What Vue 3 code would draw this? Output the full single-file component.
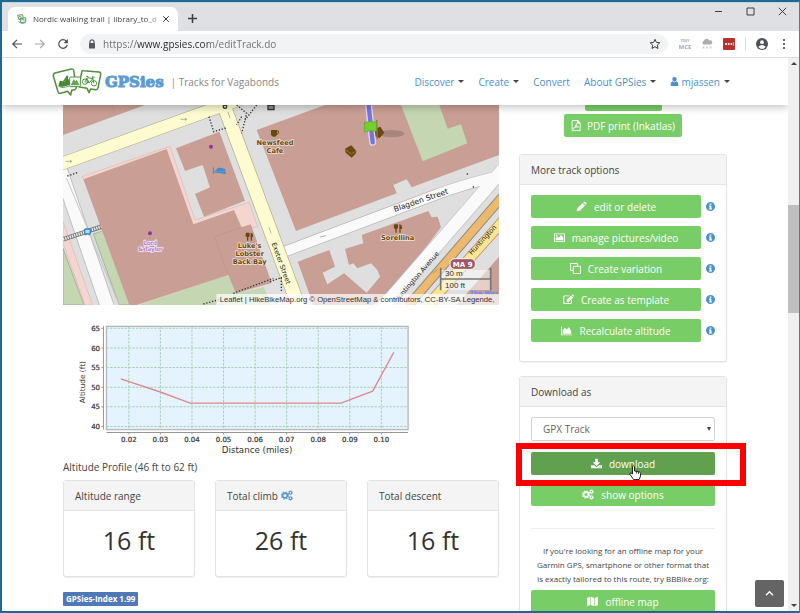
<script setup>
import { ref } from 'vue'

const address = ref('https://www.gpsies.com/editTrack.do')
const format = ref('GPX Track')

const nav = [
  { label: 'Discover', caret: true },
  { label: 'Create', caret: true },
  { label: 'Convert' },
  { label: 'About GPSies', caret: true },
  { label: 'mjassen', caret: true, user: true },
]

const icons = {
  pencil: 'M1 15l1-4.5 7.6-7.6 3.5 3.5L5.500 14zM10.600 2l1-1q.8-.7 1.600 0l1.900 1.900q.7.8 0 1.600l-1 1z',
  picture: 'M0 2h16v12H0zM1.400 3.400v9.200h13.200V3.400zM2.500 11.500V9.500L5 7l1.500 1.500 4-4 3 3v4zM4 4.200a1.300 1.300 0 1 1 0 2.600 1.300 1.300 0 0 1 0-2.600z',
  copy: 'M1.500 0H10q1.500 0 1.500 1.500V4h3Q16 4 16 5.500v9q0 1.500-1.500 1.500h-9Q4 16 4 14.500V11.500H1.500Q0 11.500 0 10V1.500Q0 0 1.500 0zM1.300 1.300v8.900H4V5.500Q4 4 5.500 4h4.700V1.300zM5.300 5.300v9.400h9.400V5.300z',
  edit: 'M2.500 2H10L8.600 3.400H3q-1.200 0-1.200 1.200V12q0 1.200 1.200 1.200h7.500q1.200 0 1.200-1.200v-2.500L13.100 8v4.500q0 2.200-2.200 2.200H2.500Q.3 14.700.3 12.500V4.200Q.3 2 2.500 2zM5.500 11.500V8.500L11.800 2.200l3 3-6.300 6.300zM12.500 1.500l.8-.8q.6-.5 1.200 0l1.300 1.300q.5.6 0 1.200l-.8.8z',
  area: 'M0 2h1.300v11.700H16V15H0zM2.300 12.700V8.500L5.500 4l3 2.500 3-3.500 3.300 6v3.700z',
  download: 'M6 1h4v5h3.500L8 11.500 2.500 6H6zM0 10.500h4.500L8 13.500l3.500-3H16V15H0zM11.500 12.700v1h1v-1zM13.700 12.700v1h1v-1z',
  map: 'M0 3l4.800-2v12L0 15zM5.600 1l4.800 2v12l-4.800-2zM11.200 3L16 1v12l-4.800 2z',
  pdf: 'M2.500 0H10l4 4v10.500q0 1.500-1.500 1.500h-10Q1 16 1 14.500v-13Q1 0 2.500 0zM2.300 1.300v13.400h10.400V5.300H8.700V1.300zM7 5h1.200q.3 2-.2 3.300 1 1.500 3.500 1.500v1.100q-1.700.3-3.800-.5-1.300.2-2.300.7-1 2.400-2 2.400l-.6-.8q.5-1.300 2-2Q7 8 7 5z',
  user: 'M8 0a3.900 4.200 0 1 1 0 8.400A3.900 4.200 0 0 1 8 0zM4.600 7.600Q8 10.800 11.400 7.600 15 8.600 15 14q0 2-2 2H3q-2 0-2-2 0-5.400 3.600-6.400z',
  info: 'M8 0a8 8 0 1 1 0 16A8 8 0 0 1 8 0zM6.500 2.500v2.300h3V2.500zM5.300 6.300v1.700h1.200v3.500H5.300v1.800h5.400v-1.800H9.500V6.300z',
}

const trackActions = [
  { icon: 'pencil', label: 'edit or delete' },
  { icon: 'picture', label: 'manage pictures/video' },
  { icon: 'copy', label: 'Create variation' },
  { icon: 'edit', label: 'Create as template' },
  { icon: 'area', label: 'Recalculate altitude' },
]

const stats = [
  { title: 'Altitude range', value: '16 ft' },
  { title: 'Total climb', value: '26 ft', gears: true },
  { title: 'Total descent', value: '16 ft' },
]

const xTicks = ['0.02', '0.03', '0.04', '0.05', '0.06', '0.07', '0.08', '0.09', '0.10'].map((label, i) => ({
  label,
  x: 206 + i * 94.5,
}))
const yTicks = ['65', '60', '55', '50', '45', '40'].map((label, i) => ({ label, y: 40 + i * 58.7 }))
</script>

<template>
  <div class="window">
    <header class="tabstrip">
      <div class="tab">
        <svg class="favicon" viewBox="0 0 16 16" aria-hidden="true">
          <path d="M1 2l8-1 1 6-7 2zM5 7l9-1v7l-8 1z" fill="#e3efda" stroke="#5f9a46" stroke-width="1.400" />
          <path d="M3 4l4 1M7 10l2-2 3 3M2 12l6 3 5-1" fill="none" stroke="#4f9bb5" stroke-width="1.500" />
        </svg>
        <span class="tab-title">Nordic walking trail | library_to_d</span>
        <button class="bare" aria-label="Close tab">
          <svg class="s8" viewBox="0 0 8 8"><path d="M1.200 1.200l5.600 5.600M6.800 1.200L1.200 6.800" class="ink" /></svg>
        </button>
      </div>
      <button class="bare newtab" aria-label="New tab">
        <svg class="s9" viewBox="0 0 9 9"><path d="M4.500 0v9M0 4.500h9" class="ink bold" /></svg>
      </button>
      <div class="controls">
        <button class="bare" aria-label="Minimize"><svg class="s9" viewBox="0 0 9 9"><path d="M1 4.500h7" class="ink" /></svg></button>
        <button class="bare" aria-label="Maximize"><svg class="s9" viewBox="0 0 9 9"><path d="M1 1h7v7H1z" class="ink" /></svg></button>
        <button class="bare" aria-label="Close"><svg class="s9" viewBox="0 0 9 9"><path d="M.8.8l7.400 7.400M8.200.8L.8 8.200" class="ink" /></svg></button>
      </div>
    </header>

    <div class="toolbar">
      <button class="bare" aria-label="Back"><svg class="s12" viewBox="0 0 12 12"><path d="M11 6H2M6 1.800L1.800 6 6 10.200" class="ink arrow" /></svg></button>
      <button class="bare" aria-label="Forward"><svg class="s12 dim" viewBox="0 0 12 12"><path d="M1 6h9M6 1.800L10.200 6 6 10.200" class="ink arrow" /></svg></button>
      <button class="bare" aria-label="Reload"><svg class="s12" viewBox="0 0 12 12"><path d="M9.400 3.300A4.300 4.300 0 1 0 10.200 7" class="ink arrow" /><path d="M10.800 1v4.200H6.600z" fill="#4a4d51" /></svg></button>
      <div class="omnibox">
        <svg class="lock" viewBox="0 0 8 10" aria-hidden="true"><path d="M2 4V2.800a2 2 0 0 1 4 0V4" fill="none" stroke="#55585c" stroke-width="1.200" /><rect x="1" y="4" width="6" height="5.500" rx=".6" fill="#55585c" /></svg>
        <input v-model="address" class="address" aria-label="Address" />
        <button class="bare" aria-label="Bookmark"><svg class="s12" viewBox="0 0 12 12"><path d="M6 1.300l1.400 3.100 3.400.4-2.500 2.300.7 3.400-3-1.800-3 1.800.7-3.400L1.200 4.800l3.400-.4z" class="ink" /></svg></button>
      </div>
      <div class="extensions">
        <svg class="tiny" viewBox="0 0 12 12" aria-hidden="true">
          <text x="6" y="4" class="tiny-top">TINY</text><text x="6" y="11" class="mce">MCE</text>
        </svg>
        <svg class="s12" viewBox="0 0 12 12" aria-hidden="true">
          <path d="M2.500 6.500a2 2 0 0 1 .2-3.600 3 3 0 0 1 5.600-.5 2.100 2.100 0 0 1 1.600 4.100z" fill="#adadad" />
          <path d="M1.500 9.500h2M5 9.500h2M8.500 9.500h2" stroke="#cfcfcf" stroke-width="2" />
        </svg>
        <svg class="s12" viewBox="0 0 12 12" aria-hidden="true">
          <rect width="12" height="12" rx="1" fill="#b9312c" />
          <circle cx="3" cy="6" r="1" fill="#fff" /><circle cx="5.700" cy="6" r="1" fill="#fff" /><circle cx="8.400" cy="6" r="1" fill="#fff" />
          <path d="M10.500 4.200v3.600" stroke="#f0c8c6" stroke-width=".8" />
        </svg>
        <span class="divider"></span>
        <button class="bare profile-button" aria-label="Profile">
          <svg class="s12" viewBox="0 0 12 12"><circle cx="6" cy="6" r="6" fill="#4d5156" /><circle cx="6" cy="4.200" r="1.900" fill="#fff" /><path d="M2.300 8.700Q6 5.500 9.700 8.700 8 10.900 6 10.900T2.300 8.700z" fill="#fff" /></svg>
        </button>
        <button class="bare" aria-label="Menu">
          <svg class="dots" viewBox="0 0 4 12"><circle cx="2" cy="2" r="1.100" /><circle cx="2" cy="6" r="1.100" /><circle cx="2" cy="10" r="1.100" /></svg>
        </button>
      </div>
    </div>

    <div class="viewport">
      <div class="page">
        <header class="site-header">
          <a class="brand" href="#">
            <svg class="logo" viewBox="0 0 150 84" aria-hidden="true">
              <g fill="#fff" stroke="#508f3c" stroke-width="4.500" stroke-linejoin="round">
                <path d="M9 15L58 3q6-1 7 5l8 50q0 6-5 7l-9 2-3 14-9-11-21 6q-6 1-8-5L4 24q-1-7 5-9z" />
                <path d="M95 8l46 4q6 1 5 7l-8 41q-1 6-7 5l-15-2-5 11-6-13-19-3q-6-1-5-7l8-38q0-6 6-5z" />
                <rect x="53" y="27" width="32" height="29" rx="3" stroke-width="3" />
              </g>
              <path d="M20 49l4-11 9 2 12-18 4 3-1 6 7 15-4 6-22 5-9-3z" fill="#47883a" />
              <path d="M19 55l14 4 20-5M36 34l6 4M33 38l6 4" fill="none" stroke="#76aa61" stroke-width="3" />
              <path d="M56 52l9-19 5 7 4-5 9 17z" fill="#6aa258" />
              <g fill="none" stroke="#508f3c" stroke-width="3">
                <circle cx="99" cy="41" r="8" /><circle cx="126" cy="46" r="8" />
                <path d="M99 41l8-12 16 3-11 12-9-14M126 46l-5-20 7 2M99 41l13 3M102 25l7 1" />
              </g>
            </svg>
            <span class="wordmark">GPSies</span>
            <span class="tagline">| Tracks for Vagabonds</span>
          </a>
          <nav class="nav">
            <a v-for="n in nav" :key="n.label" href="#">
              <svg v-if="n.user" class="user" viewBox="0 0 16 16" aria-hidden="true"><path :d="icons.user" /></svg>
              {{ n.label }}
              <span v-if="n.caret" class="caret"></span>
            </a>
          </nav>
        </header>

        <main class="content">
          <section class="track">
            <svg class="map" viewBox="9 15 1308 600" role="img" aria-label="Track map">
              <rect x="9" y="15" width="1308" height="600" fill="#dfdfdf" />
              <g fill="#f4d5cf" stroke="#d9bab4" stroke-width="2">
                <path d="M65 230L330 139 405 360 567 307 593 380 500 400 400 375 300 200 75 240z" />
                <path d="M9 365L98 615H75L9 430z" />
              </g>
              <g fill="#c4d6b2" stroke="#93a088" stroke-width="2">
                <path d="M9 445L72 615H9zM100 402l30-10 85 223h-37z" />
                <path d="M235 615l270-90 22 55 84-18 24 53z" stroke="none" />
              </g>
              <g fill="#c99f95">
                <path d="M9 15h246L9 105z" />
                <path d="M70 238L320 147l80 226 122-43 23 53 28-9 62 175-108 31-22-55-275 90h-22z" />
                <path d="M348 145L478 95l77 207-123 48-27-68 45-20-22-67-53 18z" />
                <path d="M590 90L795 15h522v150l-262 97-15-24-40 17 10 25-302 113z" />
                <path d="M855 447l55-17-5-25 200-72 10 19 18-2 10 32-63 83-110 125-30 25-20-37 40-48-8-20-19-20-41 15-12-15-13 5z" />
                <path d="M713 485l95-35 17 50-37 18 14 35 50-33 68 58 20 37H760z" />
                <path d="M1317 470v145h-127z" />
              </g>
              <path d="M463 410l82-27 28-9M463 410l42 115M165 40l-8-25" fill="none" stroke="#bd9288" stroke-width="2" />
              <path d="M1023 15l65 169 134-54-19-57-40 13-25-71z" fill="#c4d6b2" />

              <g fill="none">
                <path d="M-2 200L142 620" stroke="#b9b9b9" stroke-width="44" /><path d="M-2 200L142 620" stroke="#fafafa" stroke-width="39" />
                <path d="M20 235L180 620" stroke="#c5c5c5" stroke-width="3" />
                <path d="M1330 207L960 632" stroke="#c0c0c0" stroke-width="42" />
                <path d="M660 460L1120 287Q1200 256 1320 227" stroke="#b7b7b7" stroke-width="34" />
                <path d="M660 460L1120 287Q1200 256 1320 227" stroke="#fafafa" stroke-width="30" />
                <path d="M1330 207L960 632" stroke="#fafafa" stroke-width="38" />
                <path d="M1330 287L1045 617" stroke="#8f8a85" stroke-width="29" /><path d="M1330 287L1045 617" stroke="#edb96c" stroke-width="23" />
                <path d="M1330 362L1100 619" stroke="#b98f86" stroke-width="33" /><path d="M1330 362L1100 619" stroke="#fde490" stroke-width="28" />
                <path d="M0 193L540 -2" stroke="#b7a98a" stroke-width="40" />
                <path d="M480 -15L720 630" stroke="#b7a98a" stroke-width="44" />
                <path d="M0 193L540 -2" stroke="#fcfcd0" stroke-width="36" />
                <path d="M480 -15L720 630" stroke="#fcfcd0" stroke-width="40" />
              </g>

              <g fill="none" stroke="#333" stroke-width="4" stroke-dasharray="4 5">
                <path d="M447 50l14 45 40-12M22 228l30-10M520 580l120-45M430 612l50-14M630 545l34-12v45" />
                <path d="M530 15l30 25-15 60M590 15l-35 45M545 50l-15 25" />
              </g>
              <path d="M9 418l115-38" stroke="#777" stroke-width="14" /><path d="M9 418l115-38" stroke="#eee" stroke-width="9" stroke-dasharray="4 3" />
              <g fill="none" stroke="#8e8e8e" stroke-width="2">
                <path d="M17 184h18l-5-4m5 4l-5 4M362 58h18l-5-4m5 4l-5 4M504 36l6 18M627 382l6 18M780 411l18-4M1118 520l16-12" />
              </g>
              <circle cx="495" cy="20" r="5" fill="none" stroke="#333" stroke-width="4" />
              <path d="M624 15h18v14h-18z" fill="#888" stroke="#333" stroke-width="4" />
              <circle cx="1222" cy="222" r="2" /><circle cx="1240" cy="261" r="2" />
              <circle cx="453" cy="140" r="6" fill="#8e35a3" /><circle cx="270" cy="400" r="6" fill="#8e35a3" />

              <path d="M460 202v20M460 216h36v6M467 213h28v-5l-20-4z" fill="#3c8fd0" stroke="#3c8fd0" stroke-width="3" />
              <rect x="74" y="387" width="17" height="15" rx="3" fill="#b9d8ef" stroke="#3684cc" stroke-width="4" /><path d="M77 406v-4M88 406v-4" stroke="#3684cc" stroke-width="4" />
              <g fill="#6b470d">
                <path d="M633 90h18v14q-2 6-9 6t-9-6z" /><circle cx="651" cy="97" r="5" fill="none" stroke="#6b470d" stroke-width="3" />
                <path d="M558 398q-4 12 3 14v10h4v-10q7-2 3-14zM572 398q8 0 7 13h-3v11h-4zM1003 373q-5 12 3 14v11h4v-11q7-2 3-14zM1018 373q9 0 8 14h-4v11h-4z" />
                <path d="M855 146l19-10 15 17-1 7-13 13-18-15zM941 88l20-8 12 18-14 16-18-6z" />
              </g>
              <path d="M857 149l17 13 13-9" fill="none" stroke="#b08b62" stroke-width="2" />
              <g class="poi">
                <text x="645" y="134">Newsfeed</text><text x="645" y="158">Cafe</text>
                <text x="569" y="443">Luke's</text><text x="569" y="468">Lobster</text><text x="569" y="493">Back Bay</text>
                <text x="1013" y="420">Sorellina</text>
              </g>
              <g class="shop"><text x="271" y="435">Lord</text><text x="271" y="454">&amp; Taylor</text></g>
              <g class="street">
                <text transform="translate(1085 308) rotate(-19)" class="large">Blagden Street</text>
                <text transform="translate(657 492) rotate(70)">Exeter Street</text>
                <text transform="translate(1138 462) rotate(-49)" class="end">Huntington Avenue</text>
                <text transform="translate(1273 424) rotate(-48)">Huntington</text>
              </g>

              <ellipse cx="995" cy="101" rx="38" ry="11" fill="#5e4b47" opacity=".3" />
              <path d="M924 0l14 127" stroke="#e3d4e4" stroke-width="21" stroke-linecap="round" />
              <path d="M924 0l14 127" stroke="#7775dc" stroke-width="13" stroke-linecap="round" />
              <path d="M950 60l2 58" stroke="#a4712d" stroke-width="4" />
              <path d="M913 68q17-6 36-1v27q-18-5-36 2z" fill="#73d12f" stroke="#58a926" stroke-width="2" />
              <rect x="1170" y="476" width="76" height="32" rx="14" fill="#9c5763" stroke="#fff" stroke-width="3" />
              <text x="1208" y="500" class="shield">MA 9</text>
              <text x="1229" y="586" class="west">The Wes</text>

              <path d="M1142 510h150v28h-150zM1142 538h150v32h-150z" fill="#fff" opacity=".5" />
              <path d="M1142 503v68M1142 537h150M1292 503v68" fill="none" stroke="#777" stroke-width="5" />
              <g class="scale"><text x="1155" y="529">30 m</text><text x="1155" y="563">100 ft</text></g>
              <rect x="469" y="582" width="860" height="34" fill="#fff" opacity=".7" />
              <text x="1303" y="607" class="credit">Leaflet | HikeBikeMap.org © OpenStreetMap &amp; contributors, CC-BY-SA Legende,</text>
            </svg>

            <svg class="chart" viewBox="9 3 1044 426" role="img" aria-label="Altitude chart">
              <rect x="139" y="34" width="903" height="309" fill="#e4f3fe" stroke="#b5b9b7" stroke-width="4" />
              <g stroke="#a9cfb0" stroke-width="3" stroke-dasharray="7 4">
                <path v-for="t in xTicks" :key="t.label" :d="`M${t.x} 34v309`" />
                <path v-for="t in yTicks" :key="t.label" :d="`M139 ${t.y}h903`" />
              </g>
              <path d="M130 34v309M139 352h903" stroke="#969696" stroke-width="3" />
              <g v-for="t in xTicks" :key="t.label">
                <path :d="`M${t.x} 352v6`" stroke="#969696" stroke-width="3" />
                <text :x="t.x" y="381" text-anchor="middle" class="tick">{{ t.label }}</text>
              </g>
              <g v-for="t in yTicks" :key="t.label">
                <path :d="`M124 ${t.y}h6`" stroke="#969696" stroke-width="3" />
                <text x="120" :y="t.y + 8" text-anchor="end" class="tick">{{ t.label }}</text>
              </g>
              <path d="M182 191L296 229 390 264H841L936 228 999 112" fill="none" stroke="#dd8a8e" stroke-width="4" />
              <text x="590" y="414" text-anchor="middle" class="axis">Distance (miles)</text>
              <text transform="translate(74 201) rotate(-90)" text-anchor="middle" class="axis vertical">Altitude (ft)</text>
            </svg>

            <p class="profile">Altitude Profile (46 ft to 62 ft)</p>

            <div class="stats">
              <article v-for="s in stats" :key="s.title" class="panel">
                <h2 class="panel-title">
                  {{ s.title }}
                  <svg v-if="s.gears" class="gears blue" viewBox="0 0 18 16" aria-hidden="true">
                    <g fill="none" stroke="currentColor">
                      <circle cx="6" cy="8" r="3.700" stroke-width="2.600" /><circle cx="6" cy="8" r="5.300" stroke-width="1.600" stroke-dasharray="2.200 1.960" />
                      <circle cx="14.200" cy="3.700" r="2" stroke-width="1.600" /><circle cx="14.200" cy="3.700" r="3.100" stroke-width="1" stroke-dasharray="1.600 1.650" />
                      <circle cx="14.200" cy="12.300" r="2" stroke-width="1.600" /><circle cx="14.200" cy="12.300" r="3.100" stroke-width="1" stroke-dasharray="1.600 1.650" />
                    </g>
                  </svg>
                </h2>
                <p class="value">{{ s.value }}</p>
              </article>
            </div>
            <span class="badge">GPSies-Index 1.99</span>
          </section>

          <aside class="side">
            <button class="btn print" aria-label="Print"></button>
            <button class="btn inkatlas">
              <svg class="icon" viewBox="0 0 16 16" aria-hidden="true"><path :d="icons.pdf" /></svg>PDF print (Inkatlas)
            </button>

            <section class="panel options">
              <h2 class="panel-title">More track options</h2>
              <ul class="actions">
                <li v-for="a in trackActions" :key="a.label">
                  <button class="btn wide">
                    <svg class="icon" viewBox="0 0 16 16" aria-hidden="true"><path :d="icons[a.icon]" /></svg>{{ a.label }}
                  </button>
                  <a href="#" class="info" :aria-label="'About ' + a.label"><svg viewBox="0 0 16 16"><path :d="icons.info" /></svg></a>
                </li>
              </ul>
            </section>

            <section class="panel downloads">
              <h2 class="panel-title">Download as</h2>
              <div class="panel-body">
                <div class="select">
                  <select v-model="format" aria-label="Download as"><option>GPX Track</option></select>
                  <span class="select-arrow"></span>
                </div>
                <div class="highlighted">
                  <button class="btn wide active">
                    <svg class="icon" viewBox="0 0 16 16" aria-hidden="true"><path :d="icons.download" /></svg>download
                  </button>
                  <span class="frame"></span>
                  <svg class="pointer" viewBox="0 0 12 15" aria-hidden="true">
                    <path d="M3.500 9V1.500q1-1.400 2 0V6l5 1q1 .4 1 1.600v2.400l-1.300 3.500H4.600L.8 9.200Q.6 7.800 2 8z" fill="#fff" stroke="#111" stroke-width=".9" />
                    <path d="M7.500 6.500v2M9.500 7v2" stroke="#111" stroke-width=".8" />
                  </svg>
                </div>
                <button class="btn wide">
                  <svg class="gears" viewBox="0 0 18 16" aria-hidden="true">
                    <g fill="none" stroke="currentColor">
                      <circle cx="6" cy="8" r="3.700" stroke-width="2.600" /><circle cx="6" cy="8" r="5.300" stroke-width="1.600" stroke-dasharray="2.200 1.960" />
                      <circle cx="14.200" cy="3.700" r="2" stroke-width="1.600" /><circle cx="14.200" cy="3.700" r="3.100" stroke-width="1" stroke-dasharray="1.600 1.650" />
                      <circle cx="14.200" cy="12.300" r="2" stroke-width="1.600" /><circle cx="14.200" cy="12.300" r="3.100" stroke-width="1" stroke-dasharray="1.600 1.650" />
                    </g>
                  </svg>show options
                </button>
                <hr />
                <p class="hint">If you're looking for an offline map for your Garmin GPS, smartphone or other format that is exactly tailored to this route, try BBBike.org:</p>
                <button class="btn wide">
                  <svg class="icon" viewBox="0 0 16 16" aria-hidden="true"><path :d="icons.map" /></svg>offline map
                </button>
              </div>
            </section>
          </aside>
        </main>

        <button class="to-top" aria-label="Back to top">
          <svg class="s9" viewBox="0 0 9 9"><path d="M1 6.300l3.500-3.500L8 6.300" fill="none" stroke="#fff" stroke-width="1.400" /></svg>
        </button>
      </div>

      <div class="scrollbar" aria-hidden="true">
        <span class="up"></span>
        <div class="rail"><div class="thumb"></div></div>
        <span class="down"></span>
      </div>
    </div>
  </div>
</template>

<style>
body {
  background: #1d6a90;
}
</style>

<style scoped>
* {
  box-sizing: border-box;
}
button,
input,
select {
  font: inherit;
  color: inherit;
}
h2,
p,
ul {
  margin: 0;
  padding: 0;
}
a {
  text-decoration: none;
}
svg {
  display: block;
  flex: none;
}
.window {
  height: 100vh;
  display: flex;
  flex-direction: column;
  border: 2px solid #1d6a90;
  border-right: 1px solid #3f7fb5;
  font: 10px/16px "Open Sans", "Noto Sans", sans-serif;
  color: #444;
  background: #fff;
}
.bare {
  border: 0;
  padding: 0;
  background: none;
  display: flex;
}
.ink {
  fill: none;
  stroke: #3a3d41;
  stroke-width: 1;
}
.ink.bold {
  stroke-width: 1.5;
}
.ink.arrow {
  stroke: #4a4d51;
  stroke-width: 1.2;
}
.dim {
  opacity: 0.5;
}
.s8 {
  width: 8px;
  height: 8px;
}
.s9 {
  width: 9px;
  height: 9px;
}
.s12 {
  width: 12px;
  height: 12px;
}

.tabstrip {
  flex: none;
  height: 29px;
  padding-left: 6px;
  background: #dee0e4;
  border-top: 1px solid #c3d3e6;
  display: flex;
  align-items: flex-end;
}
.tab {
  width: 170px;
  height: 24px;
  padding: 0 8px 0 9px;
  border-radius: 7px 7px 0 0;
  background: #fff;
  display: flex;
  align-items: center;
}
.favicon {
  width: 10px;
  height: 10px;
  margin-right: 6px;
}
.tab-title {
  flex: 1;
  min-width: 0;
  overflow: hidden;
  white-space: nowrap;
  font-size: 8px;
  color: #3c3f43;
  mask-image: linear-gradient(to right, #000 88%, transparent);
}
.newtab {
  margin: 0 0 8px 10px;
}
.controls {
  margin-left: auto;
  align-self: flex-start;
  display: flex;
  gap: 23px;
  padding: 4px 12px 0 0;
}
.toolbar {
  flex: none;
  height: 27px;
  padding: 0 13px 0 9px;
  display: flex;
  align-items: center;
  gap: 11px;
  border-bottom: 1px solid #dcdcdc;
}
.omnibox {
  flex: 1;
  height: 20px;
  border-radius: 10px;
  background: #f1f3f4;
  display: flex;
  align-items: center;
  gap: 7px;
  padding: 0 7px 0 8px;
}
.lock {
  width: 8px;
  height: 10px;
}
.address {
  flex: 1;
  min-width: 0;
  border: 0;
  padding: 0;
  outline: 0;
  color: transparent;
  background: linear-gradient(to right, #6b6e72 34px, #26282b 34px, #26282b 105px, #6b6e72 105px);
  background-clip: text;
}
.extensions {
  display: flex;
  align-items: center;
  gap: 10px;
}
.tiny {
  width: 12px;
  height: 12px;
  font: bold 4px "Liberation Sans", sans-serif;
  text-anchor: middle;
  fill: #a0aac8;
}
.mce {
  font: bold 6px "Open Sans", sans-serif;
}
.divider {
  width: 1px;
  height: 12px;
  background: #dadada;
}
.dots {
  width: 4px;
  height: 12px;
  margin-left: 4px;
  fill: #3f4246;
}

.viewport {
  flex: 1;
  min-height: 0;
  display: flex;
}
.page {
  position: relative;
  flex: 1;
  min-width: 0;
  overflow: hidden;
  display: flex;
  flex-direction: column;
}
.site-header {
  position: relative;
  z-index: 1;
  flex: none;
  height: 47px;
  padding: 0 58px 0 50px;
  background: #fff;
  box-shadow: 0 2px 8px rgba(0, 0, 0, 0.25);
  display: flex;
  align-items: center;
  justify-content: space-between;
}
.brand {
  display: flex;
  align-items: center;
}
.logo {
  width: 50px;
  height: 28px;
}
.wordmark {
  margin-left: 3px;
  font: bold 15px/20px "DejaVu Serif", serif;
  color: #5b9bd3;
  -webkit-text-stroke: 1px #5b9bd3;
}
.tagline {
  margin-left: 7px;
  color: #888;
}
.nav {
  display: flex;
  gap: 14px;
}
.nav a {
  display: flex;
  align-items: center;
  white-space: nowrap;
  color: #4a90cc;
}
.user {
  width: 9px;
  height: 9px;
  margin-right: 2px;
  fill: #4a90cc;
}
.caret {
  margin-left: 4px;
  border: 3px solid transparent;
  border-top-color: #444;
  border-bottom: 0;
}

.content {
  flex: 1;
  min-height: 0;
  overflow: hidden;
  padding: 0 61px;
  display: grid;
  grid-template-columns: minmax(0, 1fr) 208px;
  align-items: start;
  gap: 20px;
}
.map {
  width: 100%;
  height: auto;
}
.poi {
  font: bold 20px "DejaVu Sans", sans-serif;
  text-anchor: middle;
  fill: #6b470d;
  stroke: #f3e7df;
  stroke-width: 4px;
  paint-order: stroke;
}
.shop {
  font: 18px "DejaVu Sans", sans-serif;
  text-anchor: middle;
  fill: #9a55c0;
  stroke: #f3e3f2;
  stroke-width: 5px;
  paint-order: stroke;
}
.street {
  font: 20px "DejaVu Sans", sans-serif;
  text-anchor: middle;
  fill: #222;
}
.street .large {
  font-size: 23px;
}
.street .end {
  text-anchor: end;
}
.shield {
  font: bold 21px "DejaVu Sans", sans-serif;
  text-anchor: middle;
  fill: #fff;
}
.west {
  font: bold 18px "DejaVu Sans", sans-serif;
  fill: #5b90ee;
}
.scale {
  font: 24px "Liberation Sans", sans-serif;
  fill: #333;
}
.credit {
  font: 23px "Liberation Sans", sans-serif;
  text-anchor: end;
  fill: #333;
}
.chart {
  width: 80%;
  height: auto;
  margin-top: 11px;
}
.tick {
  font: 21px "DejaVu Sans", sans-serif;
  fill: #333;
  stroke: #333;
  stroke-width: 0.6px;
}
.axis {
  font: 26px "DejaVu Sans", sans-serif;
  fill: #333;
}
.vertical {
  font-size: 22px;
}
.profile {
  margin: 1px 0 5px;
}
.stats {
  display: grid;
  grid-template-columns: repeat(3, 1fr);
  gap: 20px;
}
.panel {
  border: 1px solid #e3e3e3;
  border-radius: 3px;
  background: #fff;
  box-shadow: 0 1px 1px rgba(0, 0, 0, 0.06);
}
.panel-title {
  display: flex;
  align-items: center;
  gap: 3px;
  height: 30px;
  padding: 0 11px;
  border-bottom: 1px solid #e3e3e3;
  background: #f4f4f4;
  font-size: 10px;
  font-weight: 400;
}
.gears {
  width: 12px;
  height: 11px;
}
.blue {
  color: #5497d0;
}
.value {
  padding: 14px 0 21px;
  text-align: center;
  font-size: 25px;
  line-height: 30px;
  color: #333;
}
.badge {
  display: inline-block;
  margin-top: 15px;
  padding: 0 3px;
  border-radius: 1px;
  background: #4f78b8;
  color: #fff;
  font-size: 8px;
  font-weight: 700;
  line-height: 14px;
}

.side {
  display: flex;
  flex-direction: column;
  align-items: center;
}
.btn {
  height: 23px;
  padding: 0 8px;
  border: 0;
  border-radius: 2px;
  background: #78cd66;
  color: #fff;
  display: flex;
  align-items: center;
  justify-content: center;
  gap: 7px;
  white-space: nowrap;
}
.print {
  width: 77px;
  margin-top: -17px;
}
.inkatlas {
  margin-top: 3px;
  padding: 0 7px;
  gap: 5px;
}
.icon {
  width: 11px;
  height: 11px;
  fill: #fff;
  fill-rule: evenodd;
}
.options,
.downloads {
  width: 100%;
}
.options {
  margin-top: 17px;
}
.actions {
  list-style: none;
  padding: 10px 11px 19px;
  display: grid;
  gap: 8px;
}
.actions li {
  display: flex;
  align-items: center;
  gap: 5px;
}
.actions .wide {
  flex: 1;
}
.info svg {
  width: 9px;
  height: 9px;
  fill: #4d92cc;
  fill-rule: evenodd;
}
.downloads {
  margin-top: 14px;
}
.panel-body {
  padding: 10px 11px;
}
.wide {
  width: 100%;
}
.select {
  position: relative;
}
.select select {
  appearance: none;
  width: 100%;
  height: 24px;
  padding: 0 11px;
  border: 1px solid #d2d2d2;
  border-radius: 2px;
  background: #fff;
  color: #666;
  display: block;
}
.select-arrow {
  position: absolute;
  right: 4px;
  top: 10px;
  border: 2px solid transparent;
  border-top: 4px solid #444;
  border-bottom: 0;
}
.highlighted {
  position: relative;
  margin: 11px 0 8px;
}
.active {
  background: #60a04f;
}
.frame {
  position: absolute;
  inset: -9px -31px -11px -15px;
  border: 6px solid #f00;
  pointer-events: none;
}
.pointer {
  position: absolute;
  left: 98px;
  top: 13px;
  width: 12px;
  height: 15px;
}
hr {
  width: 100%;
  margin: 22px 0 15px;
  border: 0;
  border-top: 1px solid #eee;
}
.hint {
  padding: 0 4px;
  margin-bottom: 4px;
  text-align: center;
  font-size: 8px;
  line-height: 14px;
}
.to-top {
  position: absolute;
  right: 4px;
  bottom: 4px;
  width: 29px;
  height: 27px;
  border: 0;
  border-radius: 2px;
  background: #646464;
  display: flex;
  align-items: center;
  justify-content: center;
}
.scrollbar {
  flex: none;
  width: 11px;
  background: #f0f0f0;
  display: flex;
  flex-direction: column;
  align-items: center;
  padding: 4px 0;
}
.rail {
  flex: 1;
  align-self: stretch;
  display: flex;
  flex-direction: column;
}
.rail::before {
  content: "";
  flex: 26;
}
.rail::after {
  content: "";
  flex: 54;
}
.thumb {
  flex: 20;
  background: #bfbfbf;
}
.up,
.down {
  border: 3px solid transparent;
}
.up {
  border-top: 0;
  border-bottom-color: #444;
}
.down {
  border-bottom: 0;
  border-top-color: #444;
}
</style>
